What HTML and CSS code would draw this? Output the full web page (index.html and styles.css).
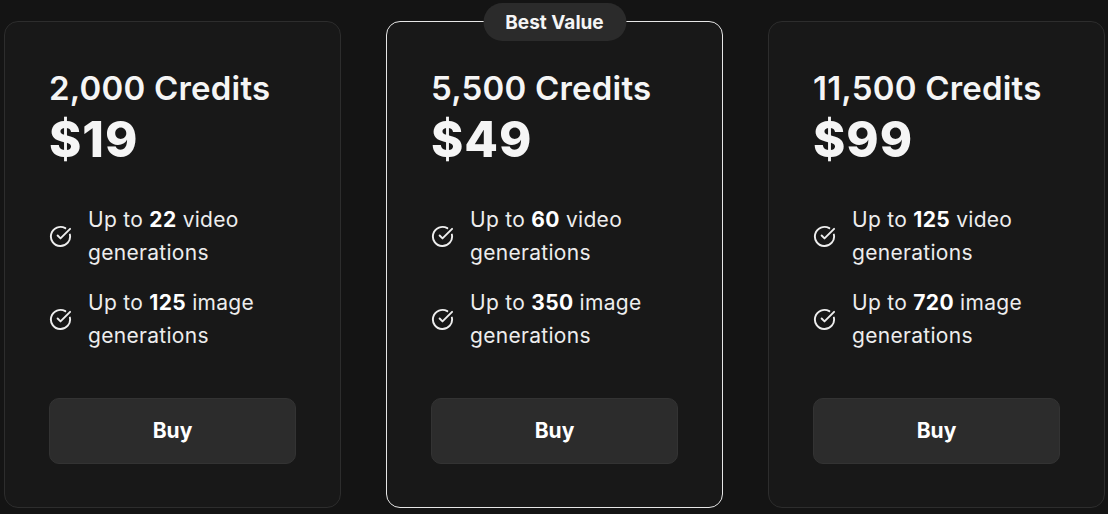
FILE: index.html
```html
<!DOCTYPE html>
<html lang="en">
<head>
<meta charset="utf-8">
<title>Credits</title>
<link rel="stylesheet" href="styles.css">
</head>
<body>
<main class="plans">
  <section class="card">
    <h2 class="title">2,000 Credits</h2>
    <div class="price">$19</div>
    <ul class="features">
      <li><svg class="check" viewBox="0 0 24 24"><path d="M21.801 10A10 10 0 1 1 17 3.335"/><path d="m9 11 3 3L22 4"/></svg><p class="feat">Up to <b>22</b> video<br>generations</p></li>
      <li><svg class="check" viewBox="0 0 24 24"><path d="M21.801 10A10 10 0 1 1 17 3.335"/><path d="m9 11 3 3L22 4"/></svg><p class="feat">Up to <b>125</b> image<br>generations</p></li>
    </ul>
    <button class="buy">Buy</button>
  </section>
  <section class="card featured">
    <div class="badge">Best Value</div>
    <h2 class="title">5,500 Credits</h2>
    <div class="price">$49</div>
    <ul class="features">
      <li><svg class="check" viewBox="0 0 24 24"><path d="M21.801 10A10 10 0 1 1 17 3.335"/><path d="m9 11 3 3L22 4"/></svg><p class="feat">Up to <b>60</b> video<br>generations</p></li>
      <li><svg class="check" viewBox="0 0 24 24"><path d="M21.801 10A10 10 0 1 1 17 3.335"/><path d="m9 11 3 3L22 4"/></svg><p class="feat">Up to <b>350</b> image<br>generations</p></li>
    </ul>
    <button class="buy">Buy</button>
  </section>
  <section class="card">
    <h2 class="title">11,500 Credits</h2>
    <div class="price">$99</div>
    <ul class="features">
      <li><svg class="check" viewBox="0 0 24 24"><path d="M21.801 10A10 10 0 1 1 17 3.335"/><path d="m9 11 3 3L22 4"/></svg><p class="feat">Up to <b>125</b> video<br>generations</p></li>
      <li><svg class="check" viewBox="0 0 24 24"><path d="M21.801 10A10 10 0 1 1 17 3.335"/><path d="m9 11 3 3L22 4"/></svg><p class="feat">Up to <b>720</b> image<br>generations</p></li>
    </ul>
    <button class="buy">Buy</button>
  </section>
</main>
</body>
</html>
```
FILE: styles.css
```css
html, body {
  margin: 0;
  padding: 0;
  background: #141414;
  height: 100%;
  overflow: hidden;
}
body {
  font-family: Inter, "Noto Sans", sans-serif;
  color: #f5f5f5;
}
.plans {
  display: flex;
  gap: 45px;
  padding: 21px 3px 0 4px;
}
.card {
  position: relative;
  box-sizing: border-box;
  width: 337px;
  height: 487px;
  background: #181818;
  border: 1px solid #2d2d2d;
  border-radius: 14px;
  padding: 43px 44px 43px 44px;
  display: flex;
  flex-direction: column;
}
.card.featured {
  border-color: #e6e6e6;
}
.badge {
  position: absolute;
  top: -19px;
  left: 50%;
  transform: translateX(-50%);
  height: 38px;
  width: 143px;
  box-sizing: border-box;
  border-radius: 19px;
  background: #2b2b2b;
  display: flex;
  align-items: center;
  justify-content: center;
  font-size: 19px;
  font-weight: 700;
  color: #f5f5f5;
}
.title {
  margin: 0;
  font-size: 33px;
  font-weight: 600;
  line-height: 46px;
  letter-spacing: 0.2px;
}
.price {
  font-size: 49px;
  font-weight: 800;
  line-height: 62px;
  margin-top: -2px;
  letter-spacing: 1px;
}
.features {
  list-style: none;
  margin: 32px 0 0 0;
  padding: 0;
  display: flex;
  flex-direction: column;
  gap: 17px;
}
.features li {
  display: flex;
  align-items: center;
  gap: 16px;
  color: #ededed;
}
.feat {
  margin: 0;
  font-size: 21px;
  line-height: 33px;
  letter-spacing: 0.3px;
}
.feat b {
  font-weight: 700;
  color: #fff;
}
.check {
  flex: none;
  width: 23px;
  height: 23px;
  fill: none;
  stroke: #eeeeee;
  stroke-width: 2;
  stroke-linecap: round;
  stroke-linejoin: round;
}
.buy {
  margin-top: auto;
  height: 66px;
  width: 100%;
  border: 1px solid #333;
  border-radius: 10px;
  background: #2c2c2c;
  color: #fff;
  font-family: inherit;
  font-size: 21px;
  font-weight: 700;
  padding-bottom: 2px;
}
```
